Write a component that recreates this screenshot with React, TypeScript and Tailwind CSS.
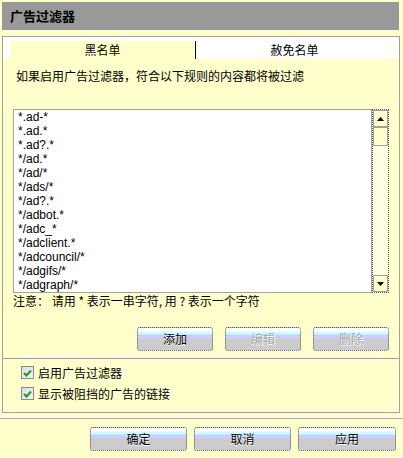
import React from 'react';

const rules = [
  '*.ad-*',
  '*.ad.*',
  '*.ad?.*',
  '*/ad.*',
  '*/ad/*',
  '*/ads/*',
  '*/ad?.*',
  '*/adbot.*',
  '*/adc_*',
  '*/adclient.*',
  '*/adcouncil/*',
  '*/adgifs/*',
  '*/adgraph/*',
];

const cjk = "font-['Noto_Sans_CJK_SC',sans-serif]";

// old skin-style push button with banded gradient
const SkinButton = ({ label, width, disabled = false }: { label: string; width: string; disabled?: boolean }) => (
  <button
    className={`${width} h-[24px] rounded-[3px] border border-dotted border-[#555] bg-[linear-gradient(to_bottom,#ffffff_0px,#ffffff_3px,#ccffff_4px,#ccffff_6px,#ccccff_7px,#ccccff_10px,#cccccc_11px,#cccccc_100%)] text-[12px] leading-[14px] ${
      disabled ? 'text-[#a8a8a8] [text-shadow:1px_1px_0_#ffffff]' : 'text-black [text-shadow:0_1px_0_#ffffff]'
    } ${cjk}`}
  >
    {label}
  </button>
);

const CheckRow = ({ label }: { label: string }) => (
  <div className="flex items-center h-[21px]">
    <div className="w-[13px] h-[13px] border border-[#8a8a8a] bg-[linear-gradient(135deg,#d8dce8,#f4f4f8)] flex items-center justify-center">
      <svg width="9" height="8" viewBox="0 0 9 8">
        <path d="M1 4 L3.5 6.5 L8 1.5" stroke="#1a9a1a" strokeWidth="2" fill="none" />
      </svg>
    </div>
    <span className="ml-[4px] text-[12px] leading-[14px] text-black">{label}</span>
  </div>
);

const ArrowButton = ({ up }: { up: boolean }) => (
  <div className="h-[17px] w-[15px] border border-[#a0a0a0] bg-[#ffffcc] flex items-center justify-center">
    <svg width="7" height="4" viewBox="0 0 7 4">
      {up ? <path d="M0 4 L3.5 0 L7 4 Z" fill="#000" /> : <path d="M0 0 L3.5 4 L7 0 Z" fill="#000" />}
    </svg>
  </div>
);

export default function App() {
  return (
    <div className={`w-[403px] h-[458px] bg-[#ffffcc] pt-[2px] overflow-hidden ${cjk}`}>
      {/* Title bar */}
      <div className="ml-[2px] w-[397px] h-[28px] bg-[#999999] flex items-center pl-[8px]">
        <span className="text-[13px] font-bold text-black">广告过滤器</span>
      </div>

      {/* Main panel */}
      <div className="ml-[2px] mt-[6px] w-[398px] h-[377px] border border-[#a0a0a0] flex flex-col">
        {/* Tabs */}
        <div className="bg-white pt-[4px] pl-[7px] pr-[5px] flex h-[22px]">
          <div className="w-[185px] h-[18px] bg-[#ffffcc] flex items-center justify-center text-[12px] text-black">黑名单</div>
          <div className="w-[1px] h-[18px] bg-black" />
          <div className="flex-1 h-[18px] bg-white flex items-center justify-center text-[12px] text-black border-r border-[#ffffcc]">
            赦免名单
          </div>
        </div>

        <div className="bg-[#ffffcc] flex-1 flex flex-col">
          <div className="pl-[13px] pt-[10px] h-[50px] text-[12px] leading-[14px] text-black">
            如果启用广告过滤器，符合以下规则的内容都将被过滤
          </div>

          {/* Rule list */}
          <div className="ml-[10px] flex h-[184px] w-[376px]">
            <div className="flex-1 bg-white border border-[#a0a0a0] overflow-hidden pl-[4px] font-['Liberation_Sans',sans-serif] text-[12px] leading-[14px] text-black">
              {rules.map((r) => (
                <div key={r} className="h-[14px]">{r}</div>
              ))}
            </div>
            <div className="w-[17px] border border-dotted border-[#555] flex flex-col bg-[#fffff0]">
              <ArrowButton up />
              <div className="h-[19px] w-[15px] border border-[#a0a0a0] bg-[#ffffcc]" />
              <div className="flex-1 bg-[repeating-conic-gradient(#ffffcc_0_25%,#ffffff_0_50%)] bg-[length:2px_2px]" />
              <ArrowButton up={false} />
            </div>
          </div>

          <div className="pl-[10px] pt-[1px] h-[34px] text-[12px] leading-[14px] text-black">
            注意： 请用 * 表示一串字符, 用 ? 表示一个字符
          </div>

          <div className="flex gap-[12px] pl-[134px] h-[31px]">
            <SkinButton label="添加" width="w-[76px]" />
            <SkinButton label="编辑" width="w-[76px]" disabled />
            <SkinButton label="删除" width="w-[76px]" disabled />
          </div>

          <div className="h-[1px] bg-[#a0a0a0]" />

          <div className="pl-[18px] pt-[3px] flex flex-col">
            <CheckRow label="启用广告过滤器" />
            <CheckRow label="显示被阻挡的广告的链接" />
          </div>
        </div>
      </div>

      {/* Bottom separator */}
      <div className="mt-[5px] h-[1px] bg-[#b0b0b0]" />

      <div className="flex gap-[7px] pl-[90px] pt-[8px]">
        <SkinButton label="确定" width="w-[97px]" />
        <SkinButton label="取消" width="w-[97px]" />
        <SkinButton label="应用" width="w-[98px]" />
      </div>
    </div>
  );
}
